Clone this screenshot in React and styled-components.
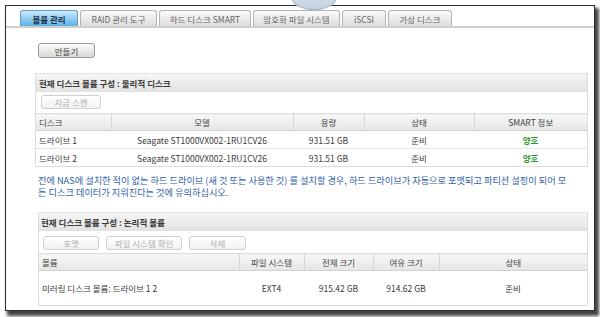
import React from 'react';
import styled, { createGlobalStyle } from 'styled-components';

const GlobalStyle = createGlobalStyle`
  html, body {
    margin: 0;
    padding: 0;
    background: #fff;
  }
  body {
    font-family: "Noto Sans CJK KR", "DejaVu Sans", sans-serif;
    font-size: 8.5px;
    color: #333;
  }
`;

const Page = styled.div`
  position: relative;
  width: 600px;
  height: 317px;
  padding: 5px 0 0 5px;
  box-sizing: border-box;
  overflow: hidden;
  background: #fff;
`;

// leftover bit of a rounded widget peeking over the window's top edge
const Blob = styled.div`
  position: absolute;
  left: 292px;
  top: -12px;
  width: 42px;
  height: 20px;
  border-radius: 50%;
  background: linear-gradient(#dbe5ee, #c2d1de);
  border: 1px solid #a3b5c5;
`;

const Window = styled.div`
  width: 590px;
  height: 306px;
  box-sizing: border-box;
  border: 1px solid #2b2b2b;
  background: #fff;
  box-shadow: 3px 4px 3px 1px rgba(35, 35, 35, 0.85);
  display: flex;
  flex-direction: column;
`;

const TabBar = styled.div`
  display: flex;
  align-items: flex-end;
  gap: 2px;
  padding: 4px 0 0 14px;
  border-bottom: 2px solid #cfcfcf;
`;

const Tab = styled.div`
  width: ${p => p.$w}px;
  height: 16px;
  box-sizing: border-box;
  display: flex;
  align-items: center;
  justify-content: center;
  border: 1px solid ${p => (p.$active ? '#5b9fcf' : '#b4b4b4')};
  border-bottom: none;
  border-radius: 3px 3px 0 0;
  background: ${p =>
    p.$active
      ? 'linear-gradient(#cfeaf9, #8fcbef 55%, #5fb2e4)'
      : 'linear-gradient(#fbfbfb, #e9e9e9 60%, #dcdcdc)'};
  color: ${p => (p.$active ? '#1d3550' : '#666')};
  font-weight: ${p => (p.$active ? 'bold' : 'normal')};
  font-size: 8.5px;
  white-space: nowrap;
`;

const Content = styled.div`
  padding: 15px 6px 0 32px;
  display: flex;
  flex-direction: column;
`;

const Button = styled.button`
  height: ${p => p.$h || 15}px;
  width: ${p => p.$w}px;
  padding: 0;
  box-sizing: border-box;
  font-family: inherit;
  font-size: 8.5px;
  border-radius: 3px;
  border: 1px solid ${p => (p.disabled ? '#cfcfcf' : '#9a9a9a')};
  background: ${p =>
    p.disabled
      ? 'linear-gradient(#ffffff, #f2f2f2)'
      : 'linear-gradient(#fdfdfd, #e6e6e6 60%, #d8d8d8)'};
  color: ${p => (p.disabled ? '#b0b0b0' : '#444')};
  cursor: default;
`;

const Panel = styled.div`
  margin: ${p => p.$top}px 0 0 ${p => p.$shift}px;
  border: 1px solid #dcdcdc;
  border-top: none;
`;

const PanelTitle = styled.div`
  height: 18px;
  display: flex;
  align-items: center;
  padding-left: ${p => p.$pad}px;
  background: linear-gradient(#f6f6f6, #e2e2e2);
  border-top: 1px solid #e2e2e2;
  font-weight: bold;
  color: #3a3a3a;
  font-size: 8.5px;
`;

const Toolbar = styled.div`
  height: ${p => p.$h}px;
  box-sizing: border-box;
  display: flex;
  gap: 7px;
  padding: ${p => p.$padTop}px 0 0 ${p => p.$padLeft}px;
`;

const Table = styled.table`
  width: 100%;
  border-collapse: collapse;
  table-layout: fixed;
  font-size: 8.5px;
`;

const Th = styled.th`
  height: 16px;
  padding: 0 0 0 ${p => (p.$left ? 3 : 0)}px;
  text-align: ${p => (p.$left ? 'left' : 'center')};
  font-weight: normal;
  color: #444;
  background: linear-gradient(#f7f7f7, #e6e6e6);
  border-top: 1px solid #dedede;
  border-bottom: 1px solid #d2d2d2;
  border-right: 1px solid #d6d6d6;
  &:last-child {
    border-right: none;
  }
`;

const Td = styled.td`
  height: ${p => p.$h}px;
  padding: 0 0 0 ${p => (p.$left ? 3 : 0)}px;
  text-align: ${p => (p.$left ? 'left' : 'center')};
  color: #3a3a3a;
  white-space: nowrap;
  border-bottom: 1px solid #e4e4e4;
  tr:last-child > & {
    border-bottom: none;
  }
`;

const Good = styled.span`
  color: #2c9a2c;
  font-weight: bold;
`;

const Notice = styled.p`
  margin: 7px 0 0 0;
  width: 530px;
  line-height: 12px;
  color: #2f5fa6;
  font-size: 9.2px;
  word-break: break-all;
`;

const tabs = [
  ['볼륨 관리', 58],
  ['RAID 관리 도구', 77],
  ['하드 디스크 SMART', 92],
  ['암호화 파일 시스템', 87],
  ['iSCSI', 44],
  ['가상 디스크', 64],
];

const disks = [
  { name: '드라이브 1', model: 'Seagate ST1000VX002-1RU1CV26', size: '931.51 GB', state: '준비', smart: '양호' },
  { name: '드라이브 2', model: 'Seagate ST1000VX002-1RU1CV26', size: '931.51 GB', state: '준비', smart: '양호' },
];

export default function App() {
  return (
    <Page>
      <GlobalStyle />
      <Window>
        <TabBar>
          {tabs.map(([label, w], i) => (
            <Tab key={label} $w={w} $active={i === 0}>
              {label}
            </Tab>
          ))}
        </TabBar>

        <Content>
          <div>
            <Button $w={57}>만들기</Button>
          </div>

          <Panel $top={15} $shift={-3}>
            <PanelTitle $pad={3}>현재 디스크 볼륨 구성 : 물리적 디스크</PanelTitle>
            <Toolbar $h={21} $padTop={3} $padLeft={5}>
              <Button $w={60} $h={14} disabled>지금 스캔</Button>
            </Toolbar>
            <Table>
              <colgroup>
                <col style={{ width: 75 }} />
                <col style={{ width: 182 }} />
                <col style={{ width: 71 }} />
                <col style={{ width: 110 }} />
                <col />
              </colgroup>
              <thead>
                <tr>
                  <Th $left>디스크</Th>
                  <Th>모델</Th>
                  <Th>용량</Th>
                  <Th>상태</Th>
                  <Th>SMART 정보</Th>
                </tr>
              </thead>
              <tbody>
                {disks.map(d => (
                  <tr key={d.name}>
                    <Td $h={17} $left>{d.name}</Td>
                    <Td $h={17}>{d.model}</Td>
                    <Td $h={17}>{d.size}</Td>
                    <Td $h={17}>{d.state}</Td>
                    <Td $h={17}><Good>{d.smart}</Good></Td>
                  </tr>
                ))}
              </tbody>
            </Table>
          </Panel>

          <Notice>
            전에 NAS에 설치한 적이 없는 하드 드라이브 (새 것 또는 사용한 것) 를 설치할 경우, 하드 드라이브가 자동으로 포맷되고 파티션 설정이 되어 모든 디스크 데이터가 지워진다는 것에 유의하십시오.
          </Notice>

          <Panel $top={14} $shift={0}>
            <PanelTitle $pad={2}>현재 디스크 볼륨 구성 : 논리적 볼륨</PanelTitle>
            <Toolbar $h={22} $padTop={5} $padLeft={4}>
              <Button $w={56} $h={14} disabled>포맷</Button>
              <Button $w={76} $h={14} disabled>파일 시스템 확인</Button>
              <Button $w={57} $h={14} disabled>삭제</Button>
            </Toolbar>
            <Table>
              <colgroup>
                <col style={{ width: 200 }} />
                <col style={{ width: 65 }} />
                <col style={{ width: 69 }} />
                <col style={{ width: 66 }} />
                <col />
              </colgroup>
              <thead>
                <tr>
                  <Th $left>볼륨</Th>
                  <Th>파일 시스템</Th>
                  <Th>전체 크기</Th>
                  <Th>여유 크기</Th>
                  <Th>상태</Th>
                </tr>
              </thead>
              <tbody>
                <tr>
                  <Td $h={34} $left>미러링 디스크 볼륨: 드라이브 1 2</Td>
                  <Td $h={34}>EXT4</Td>
                  <Td $h={34}>915.42 GB</Td>
                  <Td $h={34}>914.62 GB</Td>
                  <Td $h={34}>준비</Td>
                </tr>
              </tbody>
            </Table>
          </Panel>
        </Content>
      </Window>
      <Blob />
    </Page>
  );
}
